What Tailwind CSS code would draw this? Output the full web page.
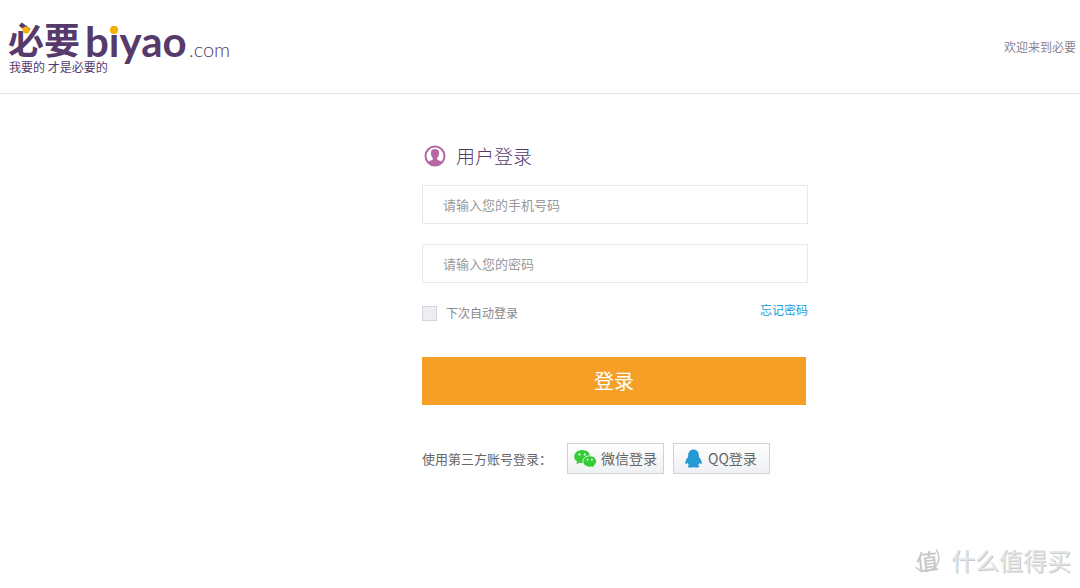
<!DOCTYPE html>
<html lang="zh-CN">
<head>
<meta charset="utf-8">
<title>用户登录</title>
<script src="https://cdn.jsdelivr.net/npm/@tailwindcss/browser@4"></script>
</head>
<body class="relative min-h-screen bg-white font-['Noto_Sans_CJK_SC',sans-serif] text-[#888]">
<header class="flex h-[94px] items-center justify-between border-b border-[#e5e5e8] pl-[9px] pr-1">
  <a href="#" aria-label="必要 biyao.com" class="block">
    <svg class="overflow-visible" width="226" height="58" viewBox="0 0 226 58" fill="#563a6c">
      <text x="-1" y="36" font-size="36" font-weight="700" font-family="Noto Sans CJK SC">必要</text>
      <text x="76" y="39" font-size="42" font-weight="700" font-family="Lato">biyao</text>
      <text x="180" y="39" font-size="20" font-family="Lato" font-weight="300">.com</text>
      <circle cx="17" cy="12" r="3.500" fill="#fbb000"/>
      <circle cx="105" cy="12" r="4" fill="#fbb000"/>
      <text x="0" y="54" font-size="12" font-family="Noto Sans CJK SC">我要的 才是必要的</text>
    </svg>
  </a>
  <span class="text-xs text-[#8b8494]">欢迎来到必要</span>
</header>
<main class="pl-[422px] pt-12">
  <form class="w-[386px]">
    <h1 class="flex h-7 items-center gap-[10px] pl-[2px] text-[19px] font-light text-[#563a6c]">
      <svg width="22" height="22" viewBox="0 0 22 22">
        <circle cx="11" cy="11" r="9.5" fill="white" stroke="#b567a5" stroke-width="2"/>
        <path d="M11 4c-2.900 0-4.300 1.900-4.100 4.500.1 1.900.8 3.400 1.900 4.200v1.500c0 1-3.400 1.300-5 3 1.800 2 4.300 3.300 7.200 3.300s5.400-1.300 7.200-3.300c-1.600-1.700-5-2-5-3v-1.500c1.100-.8 1.800-2.300 1.900-4.200C15.300 5.900 13.900 4 11 4z" fill="#b567a5"/>
      </svg>
      用户登录
    </h1>
    <input type="tel" aria-label="手机号码" placeholder="请输入您的手机号码" class="mt-[15px] block h-[39px] w-full border border-[#e8e8e8] px-5 text-[13px] text-[#555] placeholder:text-[#999]">
    <input type="password" aria-label="密码" placeholder="请输入您的密码" class="mt-5 block h-[39px] w-full border border-[#e8e8e8] px-5 text-[13px] text-[#555] placeholder:text-[#999]">
    <div class="mt-[17px] flex items-start justify-between text-xs leading-5">
      <label class="flex items-center gap-[9px] pt-[3px]">
        <input type="checkbox" class="size-[15px] appearance-none border border-[#d6d3dc] bg-[#efedf2] checked:bg-[#563a6c]">下次自动登录</label>
      <a href="#" class="text-[#1b9ddb]">忘记密码</a>
    </div>
    <button type="submit" class="mt-[34px] block h-12 w-[384px] bg-[#f59f27] text-[20px] leading-none text-white">登录</button>
    <div class="mt-[38px] flex items-center whitespace-nowrap">
      <span class="w-[145px] text-[13px] text-[#666]">使用第三方账号登录：</span>
      <button type="button" class="flex h-[31px] w-[97px] items-center gap-1 border border-[#d2d2d6] bg-linear-to-b from-white to-[#eff0f3] pl-[6px] text-[14px] text-[#666]">
        <svg width="23" height="20" viewBox="0 0 23 20" fill="#34cb36">
          <path d="M8.2 1C3.700 1 .2 3.900.2 7.500c0 2.100 1.100 3.900 3 5.100l-.9 2.700 3-1.600c1 .3 1.900.4 2.900.4 4.500 0 8-2.900 8-6.600S12.700 1 8.200 1z"/>
          <path d="M15.700 6.800c-3.800 0-6.800 2.600-6.800 5.700s3 5.700 6.800 5.700c.8 0 1.600-.1 2.300-.3l2.500 1.400-.7-2.300c1.600-1 2.700-2.600 2.700-4.500 0-3.100-3-5.700-6.800-5.700z" stroke="#fafafa" stroke-width=".9"/>
          <circle cx="5.500" cy="5.500" r="1.100" fill="white"/><circle cx="10.700" cy="5.500" r="1.100" fill="white"/>
          <circle cx="13.500" cy="10.700" r=".9" fill="white"/><circle cx="17.900" cy="10.700" r=".9" fill="white"/>
        </svg>
        微信登录
      </button>
      <button type="button" class="ml-[9px] flex h-[31px] w-[97px] items-center gap-[6px] border border-[#d2d2d6] bg-linear-to-b from-white to-[#eff0f3] pl-[11px] text-[14px] text-[#666]">
        <svg width="17" height="19" viewBox="0 0 17 19" fill="#2499d3">
          <path d="M8.500.5c-3.400 0-5.300 2.500-5.300 5.700v1.600C1.500 9.800.3 12 .3 13.700c0 1.100.5 1.700 1 1.400.5-.3.9-.8 1.200-1.300.3 1 .8 1.800 1.500 2.500-.8.300-1.300.8-1.300 1.300 0 .7 1.100 1 2.800 1 1.300 0 2.400-.3 3-.9.600.6 1.700.9 3 .9 1.700 0 2.800-.3 2.800-1 0-.5-.5-1-1.300-1.300.7-.7 1.200-1.500 1.500-2.500.3.500.7 1 1.200 1.300.5.300 1-.3 1-1.400 0-1.700-1.200-3.900-2.900-5.900V6.200c0-3.200-1.900-5.700-5.300-5.700z"/>
        </svg>
        QQ登录
      </button>
    </div>
  </form>
</main>
<div class="absolute right-[9px] bottom-3 flex items-center gap-[9px] text-2xl leading-8 text-[#e6e6e6] [text-shadow:1px_1px_0_#c8c8c8]">
  <div class="relative flex size-[30px] items-center justify-center">
    <svg class="absolute inset-0" width="30" height="30" viewBox="0 0 30 30" fill="none" stroke="#ccc" stroke-width="1.500">
      <path d="M24 4.500a13.500 13.500 0 0 1-20.500 17.500"/>
    </svg>
    <span class="-rotate-6 text-[22px] font-medium text-[#c8c8c8] [text-shadow:none]">值</span>
  </div>
  <span>什么值得买</span>
</div>
</body>
</html>
